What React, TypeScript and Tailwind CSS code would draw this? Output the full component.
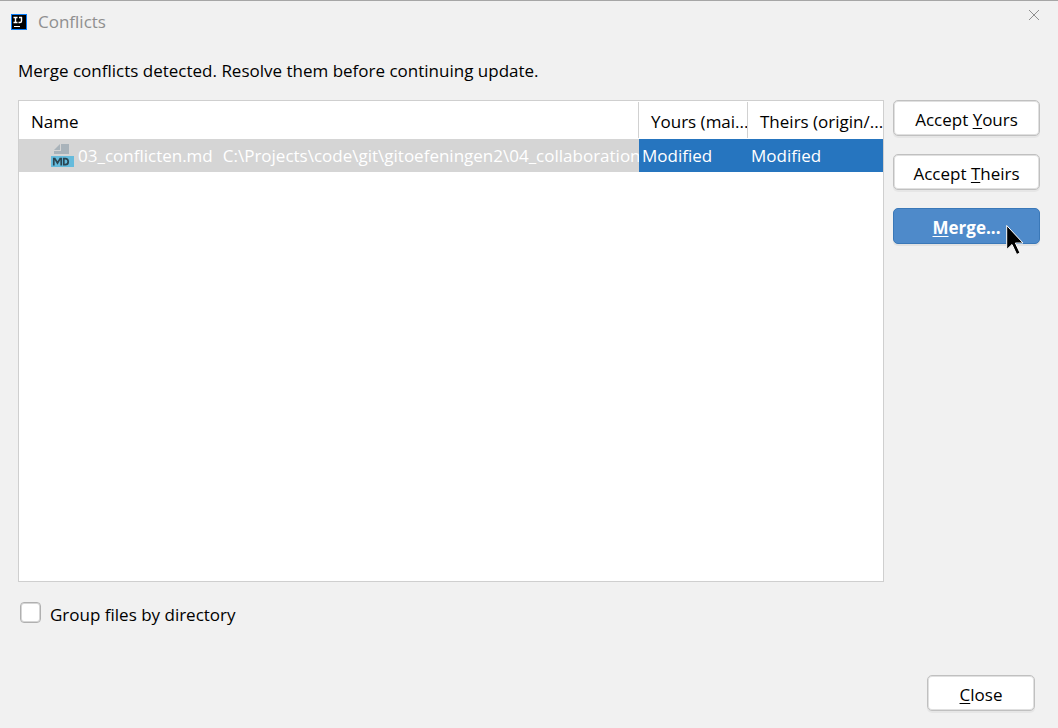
import { ReactNode } from "react";

function AppIcon() {
  return (
    <svg width="16" height="16" viewBox="0 0 16 16" aria-hidden="true">
      <rect width="16" height="16" fill="#087cfa" />
      <rect x="1" y="1" width="14" height="14" fill="#000" />
      <path
        d="M2.500 3.500h4M4.500 3v6M2.500 8.500h4M8 3.500h3M10.500 3v4q0 1.500-1.500 1.500H7.500"
        fill="none"
        stroke="#fff"
        strokeWidth="1.400"
      />
      <rect x="3" y="12" width="6" height="1" fill="#fff" />
    </svg>
  );
}

function CloseIcon() {
  return (
    <svg width="10" height="10" viewBox="0 0 10 10" aria-hidden="true">
      <path d="M0 0l10 10M10 0L0 10" stroke="#8f8f8f" strokeWidth="1" />
    </svg>
  );
}

function MarkdownIcon() {
  return (
    <svg width="24" height="24" viewBox="0 0 24 24" aria-hidden="true" className="shrink-0">
      <path d="M11 0h8v10H4V7h7z" fill="#a9b3ba" />
      <path d="M10 0v6H4z" fill="#a9b3ba" />
      <rect x="1" y="12" width="23" height="11" fill="#65bbdc" />
      <path
        d="M3.800 21.500v-7h1L7.500 19l2.700-4.500h1v7M13.800 14.700v6h1.400c2 0 3-1.200 3-3s-1-3-3-3z"
        fill="none"
        stroke="#2c4652"
        strokeWidth="1.700"
      />
    </svg>
  );
}

function Cursor() {
  return (
    <svg
      width="18"
      height="31"
      viewBox="0 0 18 31"
      aria-hidden="true"
      className="pointer-events-none absolute top-4 left-[113px]"
    >
      <path
        d="M.7 1.500v24l5.300-5 4.700 10 3.300-1.500-4.600-10H17z"
        fill="#000"
        stroke="#fff"
        strokeWidth="1"
      />
    </svg>
  );
}

function DialogButton({ children, primary = false }: { children: ReactNode; primary?: boolean }) {
  return (
    <button
      type="button"
      className={
        primary
          ? "h-9 w-full rounded-[5px] border border-[#3a78b8] bg-[#4e8aca] pt-[3px] leading-6 font-bold text-white shadow-[0_2px_0_#e2e2e2]"
          : "h-9 w-full rounded-[5px] border border-[#c0c0c0] bg-white pt-[3px] leading-6 shadow-[inset_0_0_0_1px_#e0e0e0,0_2px_0_#e6e6e6]"
      }
    >
      {children}
    </button>
  );
}

function Key({ children }: { children: ReactNode }) {
  return <span className="underline decoration-1 underline-offset-2">{children}</span>;
}

export default function App() {
  return (
    <main className="flex min-h-screen flex-col border-t border-[#a6a6a6] bg-[#f1f1f1] font-['Open_Sans','Noto_Sans',sans-serif] text-[17px] leading-6 text-black">
      <header className="flex h-[42px] items-center pr-[19px] pl-[11px]">
        <AppIcon />
        <h1 className="ml-[11px] grow text-[#8f8f8f]">Conflicts</h1>
        <button type="button" aria-label="Close window" className="mb-[14px] p-0">
          <CloseIcon />
        </button>
      </header>

      <p className="mt-4 px-[18px]">Merge conflicts detected. Resolve them before continuing update.</p>

      <section className="mt-[17px] flex grow gap-[9px] px-[18px]">
        <div className="min-w-0 grow border border-[#cfcfcf] bg-white">
          <table className="w-full table-fixed border-collapse text-left">
            <colgroup>
              <col />
              <col className="w-[109px]" />
              <col className="w-[135px]" />
            </colgroup>
            <thead>
              <tr className="h-[38px]">
                <th className="p-0 font-normal">
                  <div className="h-9 border-r border-[#d1d1d1] pt-2 pl-3">Name</div>
                </th>
                <th className="p-0 font-normal">
                  <div className="h-9 overflow-hidden border-r border-[#d1d1d1] pt-2 pl-3 whitespace-nowrap">Yours (mai...</div>
                </th>
                <th className="p-0 font-normal">
                  <div className="h-9 overflow-hidden pt-2 pl-3 whitespace-nowrap">Theirs (origin/...</div>
                </th>
              </tr>
            </thead>
            <tbody>
              <tr className="h-[33px] text-white">
                <td className="bg-[#d5d5d5] p-0">
                  <div className="flex items-center overflow-hidden pt-px pl-[31px] whitespace-nowrap">
                    <MarkdownIcon />
                    <span className="ml-1">03_conflicten.md</span>
                    <span className="ml-[10px]">C:\Projects\code\git\gitoefeningen2\04_collaboration</span>
                  </div>
                </td>
                <td className="bg-[#2675bf] pt-px pr-0 pb-0 pl-[3px]">Modified</td>
                <td className="bg-[#2675bf] pt-px pr-0 pb-0 pl-[3px]">Modified</td>
              </tr>
            </tbody>
          </table>
        </div>
        <div className="flex w-[147px] shrink-0 flex-col gap-[18px]">
          <DialogButton>
            Accept <Key>Y</Key>ours
          </DialogButton>
          <DialogButton>
            Accept <Key>T</Key>heirs
          </DialogButton>
          <div className="relative">
            <DialogButton primary>
              <Key>M</Key>erge...
            </DialogButton>
            <Cursor />
          </div>
        </div>
      </section>

      <label className="mt-[17px] flex items-start gap-[9px] self-start pt-px pl-5">
        <input
          type="checkbox"
          className="mt-[2px] size-[21px] appearance-none rounded-[4px] border border-[#b0b0b0] bg-white shadow-[inset_0_0_0_1px_#d6d6d6] checked:bg-[#4e8aca]"
        />
        <span className="pt-[3px]">Group files by directory</span>
      </label>

      <footer className="flex justify-end pt-12 pr-[23px] pb-[17px]">
        <div className="w-[108px]">
          <DialogButton>
            <Key>C</Key>lose
          </DialogButton>
        </div>
      </footer>
    </main>
  );
}
